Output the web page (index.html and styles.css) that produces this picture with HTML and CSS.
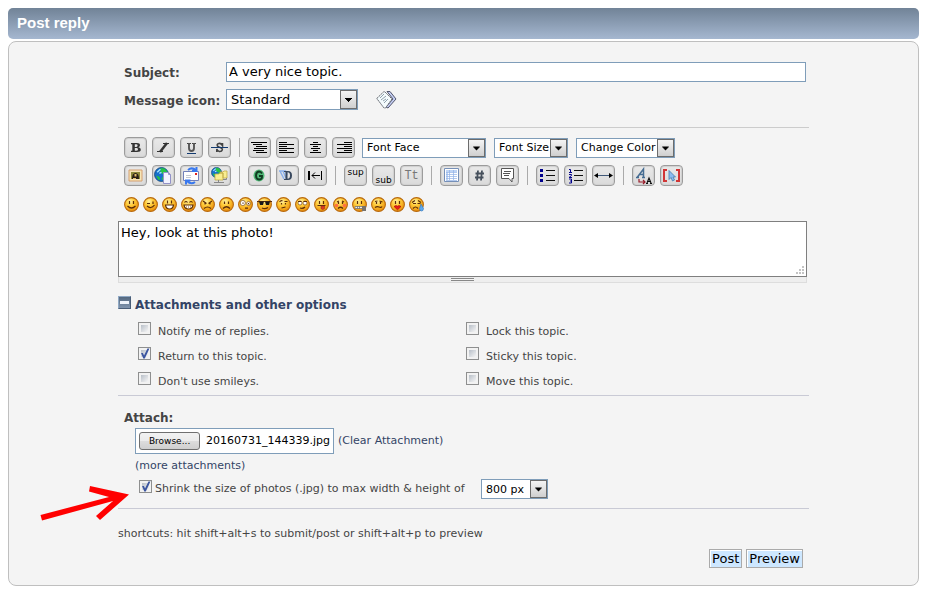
FILE: index.html
```html
<!DOCTYPE html>
<html lang="en">
<head>
<meta charset="utf-8">
<title>Post reply</title>
<link rel="stylesheet" href="styles.css">
</head>
<body>
<svg class="defs" aria-hidden="true">
  <defs>
    <radialGradient id="gold" cx="40%" cy="28%" r="75%">
      <stop offset="0" stop-color="#fff0a0"/><stop offset=".4" stop-color="#ffcb38"/><stop offset="1" stop-color="#e98a08"/>
    </radialGradient>
    <symbol id="face" viewBox="0 0 15 15"><circle cx="7.5" cy="7.5" r="6.9" fill="url(#gold)" stroke="#b86a10" stroke-width="1.1"/></symbol>
    <symbol id="arrow" viewBox="0 0 15 17"><path d="M4 7h7v1h-1v1h-1v1h-1v1h-1v-1h-1v-1h-1v-1h-1z" fill="#000"/></symbol>
    <symbol id="globe" viewBox="0 0 14 14"><circle cx="7" cy="7" r="6.500" fill="#1670cc" stroke="#174878" stroke-width=".8"/><path d="M6 1l4 .5 2.500 3-1.500 3-3-1-2-2zM9 8l4-1-1 4-3 2-2-2zM2 8l3 1 1 3-2 0z" fill="#25c445"/><path d="M3 5l3-3M5 6l2-1" stroke="#a5e4ff" stroke-width="1.300"/></symbol>
  </defs>
</svg>
<header class="title-bar"><h1>Post reply</h1></header>
<main class="panel">
<form class="form">
  <div class="fields">
    <label for="subject">Subject:</label>
    <input class="subject" id="subject" type="text" value="A very nice topic.">
    <label for="icon">Message icon:</label>
    <div class="icon-row">
      <span class="select select-icon"><select id="icon"><option>Standard</option></select><svg class="drop"><use href="#arrow"/></svg></span>
      <svg class="msg-icon" width="21" height="20" viewBox="0 0 21 20"><path d="M11 1.500h3l6 7.500-8 9-2-1 7-8z" fill="#c5cff5" stroke="#50546a"/><path d="M.8 8.500L8 1.500l1 .5 7 7-6.500 9-1.500 0z" fill="#f4fbfd" stroke="#62666e" stroke-dasharray="2 .6"/><path d="M4 8l4-4M5 10l5-4M7 11l3-2M8 13l4-4" stroke="#8fa0ac"/></svg>
    </div>
  </div>
  <hr>
  <div class="editor">
    <div class="tools">
      <button type="button" class="tool" aria-label="Bold"><svg viewBox="0 0 21 19"><path d="M6 5h6q3 0 3 2.300 0 1.500-1.600 2 2.400.4 2.400 2.500Q15.800 14 12 14H6v-1.200h1.300V6.200H6zM9.800 6.300v2.600h1.400q1.400 0 1.400-1.300t-1.400-1.300zm0 3.800v2.700h1.400q1.800 0 1.800-1.400t-1.800-1.300z" fill="#333" fill-rule="evenodd"/></svg></button>
      <button type="button" class="tool" aria-label="Italic"><svg viewBox="0 0 21 19"><path d="M10 5.500h6M4 13.500h6" stroke="#333"/><path d="M14 5L7 14" stroke="#333" stroke-width="2.500"/></svg></button>
      <button type="button" class="tool" aria-label="Underline"><svg viewBox="0 0 21 19"><path d="M6 5.500h4M11 5.500h4" stroke="#444"/><path d="M8 5v5q0 3 2.500 3t2.500-3V5" fill="none" stroke="#555" stroke-width="1.900"/><path d="M6 15.500h9" stroke="#123a70"/></svg></button>
      <button type="button" class="tool" aria-label="Strikethrough"><svg viewBox="0 0 21 19"><path d="M13.500 5v2.500Q12 5 9.800 5.500q-2.300.7-1.300 2.500.5.800 2 1.300 3 .8 2.800 2.600-.5 1.800-3 1.600Q8.300 13.300 7.800 11V14" fill="none" stroke="#444" stroke-width="1.600"/><path d="M2 9.500h17" stroke="#123a70"/></svg></button>
      <span class="sep"></span>
      <button type="button" class="tool" aria-label="Preformatted"><svg viewBox="0 0 21 19" stroke="#000"><path d="M2 4.500h16M4 6.500h9M7 8.500h11M5 10.500h13M4 12.500h11M7 14.500h11"/></svg></button>
      <button type="button" class="tool" aria-label="Align left"><svg viewBox="0 0 21 19" stroke="#000"><path d="M2 4.500h8M2 6.500h15M2 8.500h8M2 10.500h15M2 12.500h8M2 14.500h15"/></svg></button>
      <button type="button" class="tool" aria-label="Center"><svg viewBox="0 0 21 19" stroke="#000"><path d="M8 4.500h5M5 6.500h11M8 8.500h5M6 10.500h9M8 12.500h5M5 14.500h11"/></svg></button>
      <button type="button" class="tool" aria-label="Align right"><svg viewBox="0 0 21 19" stroke="#000"><path d="M11 4.500h8M4 6.500h15M11 8.500h8M4 10.500h15M11 12.500h8M4 14.500h15"/></svg></button>
      <div class="selects">
        <span class="select select-face"><select aria-label="Font face"><option>Font Face</option></select><svg class="drop"><use href="#arrow"/></svg></span>
        <span class="select select-size"><select aria-label="Font size"><option>Font Size</option></select><svg class="drop"><use href="#arrow"/></svg></span>
        <span class="select select-color"><select aria-label="Color"><option>Change Color</option></select><svg class="drop"><use href="#arrow"/></svg></span>
      </div>
    </div>
    <div class="tools">
      <button type="button" class="tool" aria-label="Image"><svg viewBox="0 0 21 19"><path d="M4 4h13v11H4z" fill="#f6e6b8" stroke="#d6a070"/><path d="M6 6h9v7H6z" fill="#8e8a3b"/><path d="M7 13q0-6 3.500-6t3.500 6z" fill="#282018"/><path d="M9.500 8h2v2.500h-2zM8 12h3v1H8z" fill="#e5bf6a"/></svg></button>
      <button type="button" class="tool" aria-label="Link"><svg viewBox="0 0 21 19"><use href="#globe" x="1" y="1" width="15" height="15"/><path d="M10.500 6.500h5l2 2v9h-7z" fill="#f3f3ff" stroke="#9292c8"/><path d="M15.500 6.500v2h2" fill="none" stroke="#9292c8"/></svg></button>
      <button type="button" class="tool" aria-label="Email"><svg viewBox="0 0 21 19"><path d="M2.500 5.500h15v9h-15z" fill="#fff" stroke="#7280b8"/><path d="M5 9.500h5M5 11.500h5" stroke="#c4c8d0"/><path d="M14 7h2v2h-2z" fill="#e02020"/><path d="M7 4q4-3.500 8 .5M15.500 1v4h-4.500M14 16q-4 3-8-1M5 18.500v-4h4.500" fill="none" stroke="#3878ef" stroke-width="2"/></svg></button>
      <button type="button" class="tool" aria-label="FTP"><svg viewBox="0 0 21 19"><use href="#globe" x="2" y="1" width="11" height="11"/><path d="M6 8h4l1-1h3v7H6zM11 6h3l1-1h3v7h-4V7h-3z" fill="#f9ee91" stroke="#c2ac48" stroke-width=".8"/><path d="M9.500 14v2M5 16.500h10M17.500 12v1.500H14" stroke="#888" fill="none"/></svg></button>
      <span class="sep"></span>
      <button type="button" class="tool" aria-label="Glow"><svg viewBox="0 0 21 19"><ellipse cx="10" cy="9.500" rx="5.500" ry="6" fill="#52b878"/><path d="M13 7.500Q12 5.500 10 5.500 7 6 7 9.500t3 4q3 0 3-2.500v-1h-3" fill="none" stroke="#103c22" stroke-width="1.900"/></svg></button>
      <button type="button" class="tool" aria-label="Shadow"><svg viewBox="0 0 21 19"><path d="M3 5l4 8M6 5l3 7M9 5l1 4M2 5h7" stroke="#8ab0ea" stroke-width="1.500"/><path d="M7 5h4q4 0 4 4.500T11 14H7v-1h1.500V6H7zm3.500 1.300v6.400q2.500 0 2.500-3.200t-2.500-3.200z" fill="#38485e" fill-rule="evenodd"/></svg></button>
      <button type="button" class="tool" aria-label="Move text"><svg viewBox="0 0 21 19" stroke="#000" fill="none"><path d="M4 5v9" stroke-width="2"/><path d="M16.500 5v9M7 9.500h8M10 6.500l-3 3 3 3"/></svg></button>
      <span class="sep"></span>
      <button type="button" class="tool tool-sup">sup</button>
      <button type="button" class="tool tool-sub">sub</button>
      <button type="button" class="tool tool-tele">Tt</button>
      <span class="sep"></span>
      <button type="button" class="tool" aria-label="Table"><svg viewBox="0 0 21 19"><path d="M3.500 2.500h14v13h-14z" fill="#fff" stroke="#7690b8"/><path d="M5 4h11v2H5zM5 6h2v8H5z" fill="#bed4f5"/><path d="M5 6.500h11M5 8.500h11M5 10.500h11M5 12.500h11M5 14.500h11M8.500 4v10M12.500 4v10" stroke="#91b2e6" stroke-width=".7"/></svg></button>
      <button type="button" class="tool" aria-label="Code"><svg viewBox="0 0 21 19" stroke="#46505c" stroke-width="1.800"><path d="M9 4.500L8 14.500M13 4.500l-1 10M6.500 7.500H15M6 11.500h8.500"/></svg></button>
      <button type="button" class="tool" aria-label="Quote"><svg viewBox="0 0 21 19"><path d="M4.500 2.500h12v10H15v3.500l-3-3.500H4.500z" fill="#fff" stroke="#555"/><path d="M7 5.500h7M6 7.500h7M7 9.500h5" stroke="#555"/></svg></button>
      <span class="sep"></span>
      <button type="button" class="tool" aria-label="Bulleted list"><svg viewBox="0 0 21 19"><path d="M3 3h3v3H3zM3 8h3v3H3zM3 13h3v3H3z" fill="#00008b"/><path d="M9 4.500h9M9 9.500h9M9 14.500h9" stroke="#111"/></svg></button>
      <button type="button" class="tool" aria-label="Numbered list"><svg viewBox="0 0 21 19" fill="none"><path d="M4 3.500h1.500v3M4 6.500h3M4 8.500h2.500v1L4 11.500h3M4 13h2.500v4H4M5 15h1.500" stroke="#00008b"/><path d="M9 4.500h9M9 9.500h9M9 14.500h9" stroke="#111"/></svg></button>
      <button type="button" class="tool" aria-label="Horizontal rule"><svg viewBox="0 0 21 19"><path d="M3 9.500h15" stroke="#405878"/><path d="M1 9.500L5 7v5zM20 9.500L16 7v5z" fill="#000"/></svg></button>
      <span class="sep"></span>
      <button type="button" class="tool" aria-label="Remove formatting"><svg viewBox="0 0 21 19" fill="none"><path d="M3 11.500h3M9 11.500h3M4.500 11L10.500 3v8M6.500 8.500h4" stroke="#456c92" stroke-width="1.500"/><path d="M6 13v3h6M10 14l2 2-2 2" stroke="#991b28" stroke-width="1.200"/><path d="M13 17.500h2M17 17.500h2M14 17l2-5 2 5M14.500 15.500h3" stroke="#111" stroke-width="1.200"/></svg></button>
      <button type="button" class="tool" aria-label="Toggle view"><svg viewBox="0 0 21 19"><path d="M6 4H3v11h3M15 4h3v11h-3" fill="none" stroke="#d13535" stroke-width="2"/><path d="M8 4.500v9l2-2 1.500 3.500 2-1-1.500-3h2.500z" fill="#8bbcf0" stroke="#447bac" stroke-width=".8"/></svg></button>
    </div>
    <div class="smileys">
      <svg viewBox="0 0 15 15"><use href="#face"/><path d="M5.500 4v3M9.500 4v3M3.500 9q4 4 8 0" class="ink"/></svg>
      <svg viewBox="0 0 15 15"><use href="#face"/><path d="M4 6.500h3M10 4.500v2.500M4 9q4 3.500 7.500-1" class="ink"/></svg>
      <svg viewBox="0 0 15 15"><use href="#face"/><path d="M5.500 3.500v3M9.500 3.500v3" class="ink"/><path d="M3.500 8h8q-.5 4-4 4t-4-4z" class="ink white"/></svg>
      <svg viewBox="0 0 15 15"><use href="#face"/><path d="M3.500 5.500q1.500-2 3 0M8.500 5.500q1.500-2 3 0" class="ink"/><path d="M3 8h9q-.5 4-4.500 4T3 8z" class="ink white"/><path d="M5.500 8v3M7.500 8v4M9.500 8v3" stroke="#b8905c" stroke-width=".7"/></svg>
      <svg viewBox="0 0 15 15"><use href="#face"/><path d="M3 4l3.500 2.500M12 4L8.500 6.500M5 6v1.500M10 6v1.500M4 11.500q3.500-3 7 0" class="ink"/></svg>
      <svg viewBox="0 0 15 15"><use href="#face"/><path d="M5.500 4.500v2.500M9.500 4.500v2.500M4 11.500q3.500-3.500 7 0" class="ink"/></svg>
      <svg viewBox="0 0 15 15"><use href="#face"/><circle cx="4.800" cy="6" r="2.600" class="thin white"/><circle cx="10.500" cy="6.500" r="1.900" class="thin white"/><path d="M5 5.500v1.300M10.500 6v1.300M7 11.200h3" class="ink"/></svg>
      <svg viewBox="0 0 15 15"><use href="#face"/><path d="M0 4.500h15M5 11q3 1.500 6-.5" class="ink"/><path d="M2 4.500h5L6 8H3zM8 4.500h5L12 8H9z" fill="#181818"/></svg>
      <svg viewBox="0 0 15 15"><use href="#face"/><path d="M3.500 5q1.500-2 3-1M8.500 4.500h3M5.500 6v1.500M9.500 6v1.500M5.500 11l4-1" class="ink"/></svg>
      <svg viewBox="0 0 15 15"><use href="#face"/><circle cx="5" cy="6" r="2" class="thin white"/><circle cx="10" cy="6" r="2" class="thin white"/><path d="M3 4.500h3.500M8.500 4.500H12M5 11q3 1 5-1" class="ink"/></svg>
      <svg viewBox="0 0 15 15"><use href="#face"/><path d="M5.500 4v3M9.500 4v3M3.500 8.500h8" class="ink"/><path d="M7 9h3.500v2.500q-1.750 2-3.500 0z" fill="#dc3c20" stroke="#9c2618" stroke-width=".6"/></svg>
      <svg viewBox="0 0 15 15"><use href="#face"/><circle cx="3.500" cy="8.500" r="1.800" fill="#ff7040"/><circle cx="11.500" cy="8.500" r="1.800" fill="#ff7040"/><path d="M4 5l2-1M9 4l2 1M5.500 5v2M9.500 5v2M5 11.500q2.500-2.500 5 0" class="ink"/></svg>
      <svg viewBox="0 0 15 15"><use href="#face"/><path d="M5.500 4v3M9.500 4v3" class="ink"/><path d="M3 9.500h9v2H3z" fill="#eee" stroke="#777" stroke-width=".8"/><path d="M5.500 9v3M7.500 9v3" stroke="#777" stroke-width=".8"/><path d="M10 9h4v5h-4z" fill="#77736c"/></svg>
      <svg viewBox="0 0 15 15"><use href="#face"/><path d="M4 4.500l2.500-.5M8.500 4l3 1M5.500 5v2M9.500 5v2M4 10.500q2-1.500 4-.5t3-.5" class="ink"/></svg>
      <svg viewBox="0 0 15 15"><use href="#face"/><path d="M5.500 4v3M9.500 4v3" class="ink"/><path d="M4 9.500l2-1 1.500.7L9 8.500l2 1-3.500 3.300z" fill="#e41d1d" stroke="#a00" stroke-width=".6"/></svg>
      <svg viewBox="0 0 15 15"><use href="#face"/><path d="M3 5.500l3-2M9 3.500l3 2M4 6.500h3M8.500 6.500h3M4 11.500q2.500-3 5 0" class="ink"/><path d="M12 7l2.500 4.500q0 2.500-2 2.500t-2-2.500z" fill="#5ea9ee" stroke="#3375bb" stroke-width=".6"/></svg>
    </div>
  </div>
  <div class="message">
    <textarea aria-label="Message">Hey, look at this photo!</textarea>
    <svg class="grip" width="8" height="8" viewBox="0 0 8 8"><path d="M6 0h2v2H6zM3 3h2v2H3zM6 3h2v2H6zM0 6h2v2H0zM3 6h2v2H3zM6 6h2v2H6z" fill="#c4c4c4"/></svg>
    <div class="resizer"><span></span></div>
  </div>
  <h2 class="more"><button type="button" class="collapse" aria-label="Collapse"></button><a href="#options">Attachments and other options</a></h2>
  <div class="options" id="options">
    <label><input type="checkbox"><span>Notify me of replies.</span></label>
    <label><input type="checkbox"><span>Lock this topic.</span></label>
    <label><input type="checkbox" checked><span>Return to this topic.</span></label>
    <label><input type="checkbox"><span>Sticky this topic.</span></label>
    <label><input type="checkbox"><span>Don't use smileys.</span></label>
    <label><input type="checkbox"><span>Move this topic.</span></label>
  </div>
  <hr class="cool">
  <section class="attach">
    <h3>Attach:</h3>
    <div class="file-row">
      <span class="file"><button type="button">Browse...</button><span>20160731_144339.jpg</span></span>
      <a href="#clear">(Clear Attachment)</a>
    </div>
    <a class="more-files" href="#more">(more attachments)</a>
    <div class="shrink">
      <label><input type="checkbox" checked><span>Shrink the size of photos (.jpg) to max width &amp; height of</span></label>
      <span class="select select-px"><select aria-label="Maximum size"><option>800 px</option></select><svg class="drop"><use href="#arrow"/></svg></span>
      <svg class="pointer" width="90" height="36" viewBox="0 0 90 36"><path d="M50 1L89 9.500 60 35l-4-4 17-15L2 35.500.500 30 69 12 49 6.500z" fill="#f00"/></svg>
    </div>
  </section>
  <hr class="cool">
  <p class="hint">shortcuts: hit shift+alt+s to submit/post or shift+alt+p to preview</p>
  <div class="actions"><button type="submit">Post</button><button type="button">Preview</button></div>
</form>
</main>
</body>
</html>
```
FILE: styles.css
```css
* { box-sizing: border-box; }
body {
  margin: 8px 7px 7px 8px;
  background: #fff;
  color: #444;
  font: 11px/16px "DejaVu Sans", sans-serif;
}
.defs { position: absolute; width: 0; height: 0; }
h1, h2, h3, p { margin: 0; }
a { color: #334466; text-decoration: none; }
button, input, select, textarea { font-family: inherit; color: #000; margin: 0; }

.title-bar {
  padding: 5px 9px 6px;
  border-radius: 5px;
  background: linear-gradient(#718397, #a5b7d0);
}
.title-bar h1 { color: #fff; font: bold 15px/20px "Liberation Sans", sans-serif; }
.panel {
  margin-top: 2px;
  padding: 20px 0 17px;
  border: 1px solid #bfbfbf;
  border-radius: 8px;
  background: #f4f4f4;
}
.form { width: 76%; margin: 0 auto; }

.fields {
  display: grid;
  grid-template-columns: 102px 1fr;
  row-gap: 7px;
  align-items: center;
  padding: 0 3px 0 6px;
}
.fields label { font-size: 12px; font-weight: bold; padding-top: 2px; }
.subject {
  width: 100%;
  height: 20px;
  padding: 0 2px 2px;
  border: 1px solid #7f9db9;
  background: #fff;
  font-size: 13px;
}
.icon-row { display: flex; align-items: center; gap: 18px; }

.select { position: relative; display: inline-block; height: 20px; }
.select select {
  appearance: none;
  display: block;
  width: 100%;
  height: 100%;
  padding: 0 18px 0 4px;
  border: 1px solid #7f9db9;
  border-radius: 0;
  background: #fff;
  font-size: 11px;
}
.drop {
  position: absolute;
  top: 1px;
  right: 1px;
  width: 17px;
  height: calc(100% - 2px);
  border: 1px solid #6c6c6c;
  background: linear-gradient(#f4f4f4, #cfcfcf);
  pointer-events: none;
}
.select-icon { width: 132px; height: 21px; }
.select-icon select { font-size: 13px; }
.select-face { width: 124px; }
.select-size { width: 74px; }
.select-color { width: 99px; }
.select-px { width: 67px; }

hr { height: 1px; margin: 17px 0 9px; border: 0; background: #ccc; }
hr.cool { margin: 0; background: #c9cad5; }

.editor { display: flex; flex-direction: column; gap: 7px; padding-left: 6px; }
.tools { display: flex; align-items: center; gap: 5px; }
.tool {
  flex: none;
  width: 23px;
  height: 21px;
  padding: 0;
  border: 1px solid #9c9c9c;
  border-radius: 4px;
  background: linear-gradient(#e9e9e9, #dadada);
  box-shadow: inset 0 0 1px 1px #d0d0d0;
  overflow: hidden;
}
.tool svg { display: block; width: 21px; height: 19px; }
.tool-sup, .tool-sub { font: 9px/10px "DejaVu Sans", sans-serif; }
.tool-sup { padding-bottom: 8px; }
.tool-sub { padding-top: 9px; }
.tool-tele { color: #777; font: 12px/18px "Liberation Mono", monospace; }
.sep { width: 1px; height: 19px; margin: 0 3px; background: #aaa; }
.selects { display: flex; gap: 8px; margin-left: 2px; }
.smileys { display: flex; gap: 4px; padding: 4px 0 9px; }
.smileys svg { width: 15px; height: 15px; }
.ink { fill: none; stroke: #5c2d08; stroke-width: 1.2; }
.thin { stroke: #7a4a1c; stroke-width: .7; }
.white { fill: #fff; }

.message { position: relative; margin-right: 2px; }
.message textarea {
  display: block;
  width: 100%;
  height: 56px;
  padding: 3px 2px;
  border: 1px solid #7f7f7f;
  resize: none;
  background: #fff;
  font-size: 13px;
  line-height: 16px;
}
.grip { position: absolute; right: 3px; bottom: 9px; }
.resizer {
  height: 6px;
  border: 1px solid #ddd;
  border-top: 0;
  background: #eee;
}
.resizer span {
  position: relative;
  top: 1px;
  display: block;
  width: 23px;
  height: 3px;
  margin: 0 auto;
  border: solid #888;
  border-width: 1px 0;
  background: #f4f4f4;
}

.more { display: flex; gap: 4px; margin-top: 13px; font-size: 12px; line-height: 18px; }
.collapse {
  display: flex;
  align-items: center;
  justify-content: center;
  width: 13px;
  height: 13px;
  padding: 0;
  border: 1px solid;
  border-color: #8fa8c4 #4a5e78 #4a5e78 #8fa8c4;
  background: linear-gradient(#54687f, #8195ae);
}
.collapse::before { content: ""; width: 9px; height: 3px; background: #eef3fa; }

input[type="checkbox"] {
  appearance: none;
  position: relative;
  flex: none;
  width: 13px;
  height: 13px;
  border: 1px solid #8e8f8f;
  background: linear-gradient(135deg, #b8bfc8, #f6f6f6) content-box, #f2f2f2;
  padding: 2px;
}
input[type="checkbox"]:checked::after {
  content: "";
  position: absolute;
  inset: 0;
  background: #3b55a0;
  clip-path: polygon(18% 45%, 35% 45%, 45% 68%, 76% 5%, 94% 5%, 52% 95%, 38% 95%);
}
.options {
  display: grid;
  grid-template-columns: 328px 1fr;
  row-gap: 7px;
  padding: 8px 0 5px 20px;
}
.options label, .shrink label { display: flex; }
.options label { gap: 7px; }
.options span { padding-top: 1px; line-height: 17px; }

.attach { padding: 13px 0 9px; }
.attach h3 { padding-left: 6px; font-size: 12px; line-height: 18px; }
.file-row { display: flex; align-items: center; gap: 4px; padding: 1px 0 0 17px; }
.file {
  display: flex;
  align-items: center;
  gap: 6px;
  height: 26px;
  padding: 0 3px;
  border: 1px solid #7f9db9;
  background: #fff;
  color: #000;
}
.file button {
  width: 61px;
  height: 18px;
  padding: 0;
  border: 1px solid #707070;
  border-radius: 3px;
  background: linear-gradient(#f2f2f2, #ebebeb 50%, #ddd 50%, #cfcfcf);
  font-size: 9px;
}
.more-files { display: block; width: max-content; margin: 4px 0 5px 17px; }
.shrink { position: relative; display: flex; gap: 4px; padding-left: 21px; }
.shrink label { flex: 0 0 338px; gap: 3px; padding-top: 1px; }
.shrink label span { line-height: 17px; }
.pointer { position: absolute; top: 6px; left: -78px; }
.hint { padding-top: 17px; }
.actions { display: flex; justify-content: flex-end; gap: 4px; padding: 7px 6px 0 0; }
.actions button {
  height: 19px;
  padding: 0 2px;
  border: 1px solid #aaa;
  background: #cde7ff;
  box-shadow: inset 1px 1px #fff;
  font-size: 13px;
  line-height: 16px;
}
```
